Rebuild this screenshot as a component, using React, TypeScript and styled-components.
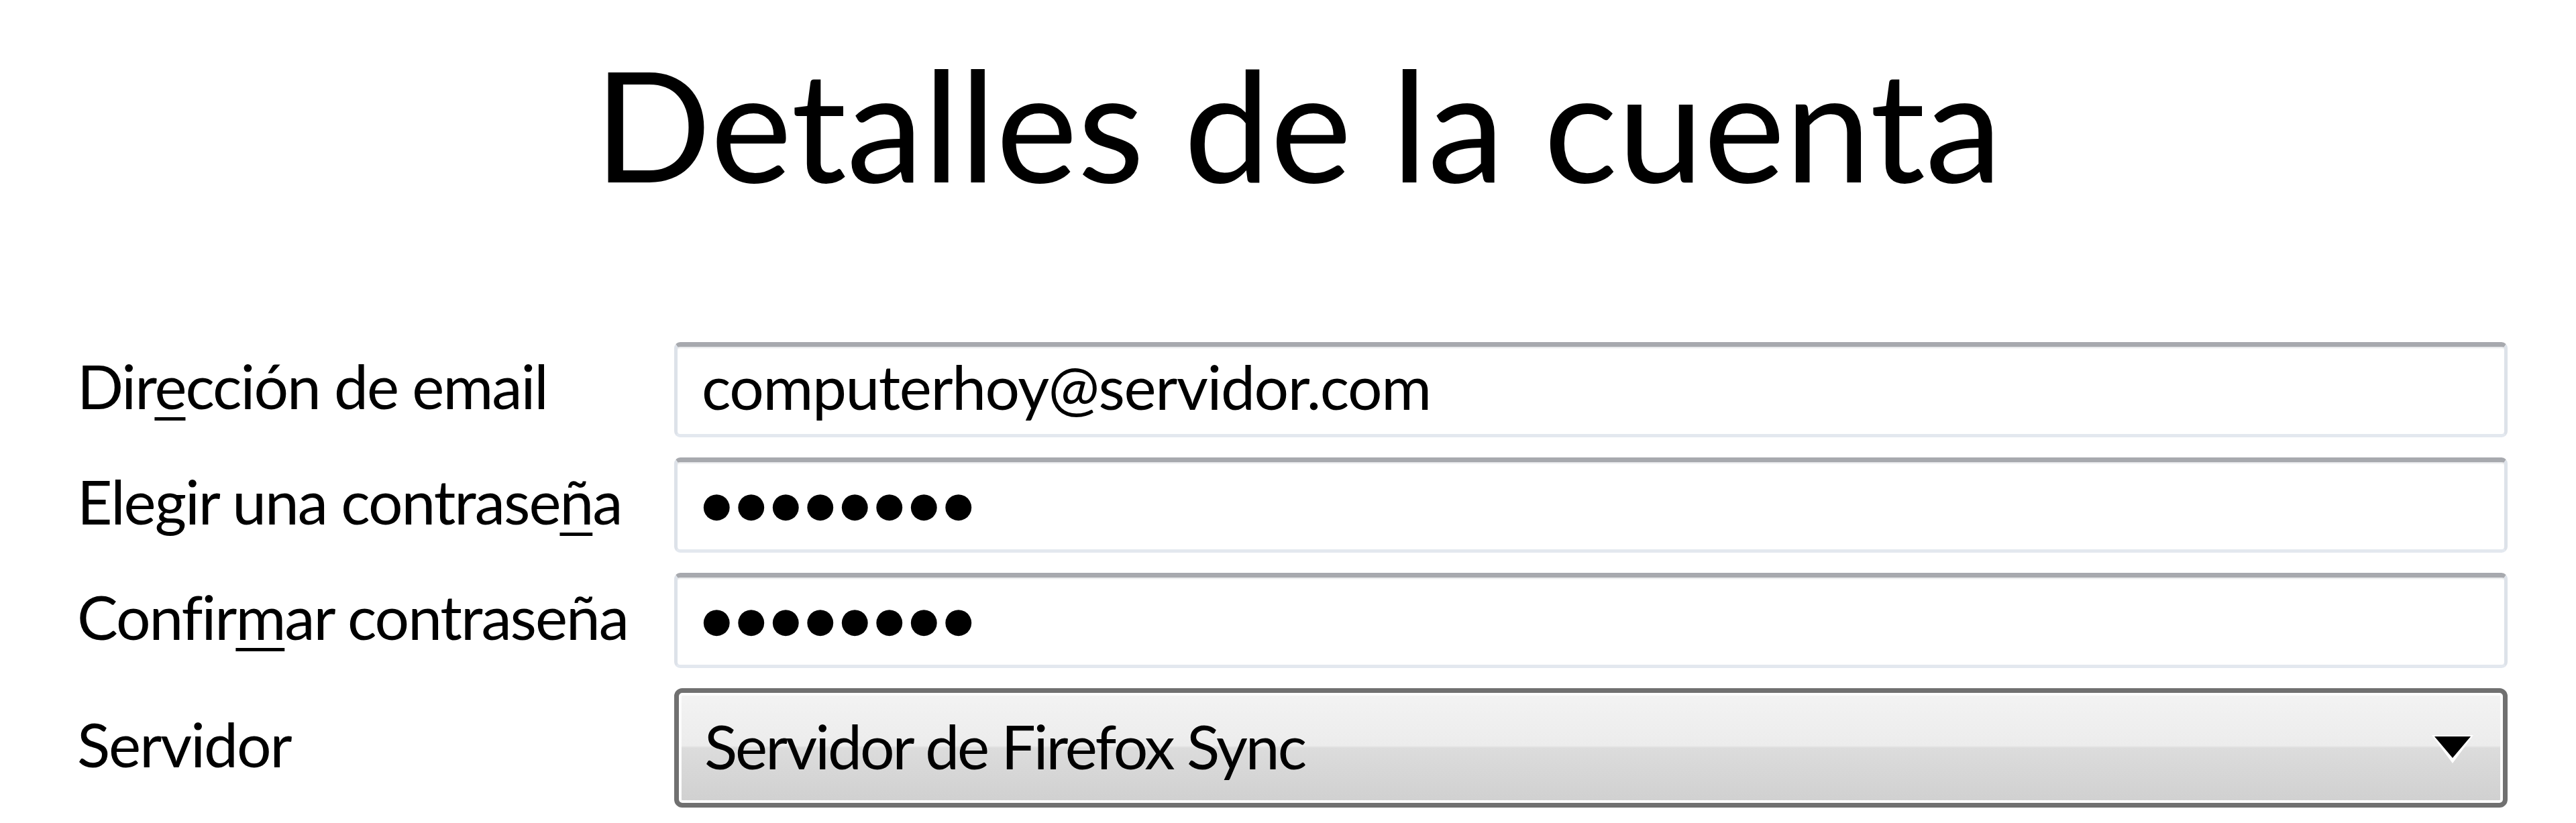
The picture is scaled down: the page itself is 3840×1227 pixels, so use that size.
import React from "react";
import styled, { createGlobalStyle } from "styled-components";

const GlobalStyle = createGlobalStyle`
  html, body {
    margin: 0;
    padding: 0;
    background: #ffffff;
  }
  body {
    font-family: Lato, "Open Sans", "DejaVu Sans", sans-serif;
    color: #000000;
  }
`;

const Page = styled.div`
  width: 3840px;
  height: 1227px;
  box-sizing: border-box;
  overflow: hidden;
  background: #ffffff;
  display: flex;
  flex-direction: column;
  padding: 68px 102px 0 115px;
`;

const Title = styled.h1`
  margin: 0;
  font-weight: 400;
  font-size: 230px;
  line-height: 230px;
  text-align: center;
  padding-left: 17px;
  white-space: nowrap;
`;

const Form = styled.div`
  margin-top: 212px;
  display: grid;
  grid-template-columns: 890px 1fr;
  row-gap: 30px;
  align-items: center;
`;

const Label = styled.label`
  font-size: 91px;
  line-height: 1.2;
  letter-spacing: -2px;
  padding-bottom: 12px;
  white-space: nowrap;
`;

const AccessKey = styled.span`
  text-decoration: underline;
  text-decoration-thickness: 5px;
  text-underline-offset: 12px;
`;

const TextBox = styled.div`
  height: 142px;
  box-sizing: border-box;
  display: flex;
  align-items: center;
  padding: 0 36px 12px 36px;
  border-style: solid;
  border-width: 7px 5px 5px 5px;
  border-color: #a7a9ae #dde2e9 #e3e8ef #dde2e9;
  border-radius: 9px;
  background: #ffffff;
  box-shadow: inset 0 3px 2px -1px #e6e7e9;
  font-size: 91px;
  line-height: 1.2;
  letter-spacing: -1.4px;
  white-space: nowrap;
`;

const Dots = styled.span`
  font-family: "DejaVu Sans", sans-serif;
  font-size: 51px;
  letter-spacing: 7px;
  padding-top: 10px;
`;

const Select = styled.div`
  height: 178px;
  box-sizing: border-box;
  display: flex;
  align-items: center;
  justify-content: space-between;
  padding: 0 48px 6px 38px;
  border: 7px solid #707070;
  border-radius: 12px;
  box-shadow: inset 0 0 0 4px #fcfcfc;
  background: linear-gradient(
    to bottom,
    #f3f3f3 0%,
    #ececec 48%,
    #dcdcdc 50%,
    #d0d0d0 100%
  );
  font-size: 91px;
  line-height: 1.2;
  letter-spacing: -3px;
  white-space: nowrap;
`;

const Arrow = styled.svg`
  width: 62px;
  height: 44px;
  margin-right: -4px;
  margin-top: 8px;
  flex: none;
`;

export default function App() {
  return (
    <>
      <GlobalStyle />
      <Page>
        <Title>Detalles de la cuenta</Title>
        <Form>
          <Label>
            Dir<AccessKey>e</AccessKey>cción de email
          </Label>
          <TextBox>computerhoy@servidor.com</TextBox>

          <Label>
            Elegir una contrase<AccessKey>ñ</AccessKey>a
          </Label>
          <TextBox>
            <Dots>●●●●●●●●</Dots>
          </TextBox>

          <Label>
            Confir<AccessKey>m</AccessKey>ar contraseña
          </Label>
          <TextBox>
            <Dots>●●●●●●●●</Dots>
          </TextBox>

          <Label>Servidor</Label>
          <Select>
            <span>Servidor de Firefox Sync</span>
            <Arrow viewBox="0 0 62 44">
              <polygon points="0,2 62,2 31,44" fill="#ffffff" />
              <polygon points="4,4 58,4 31,36" fill="#000000" />
            </Arrow>
          </Select>
        </Form>
      </Page>
    </>
  );
}
